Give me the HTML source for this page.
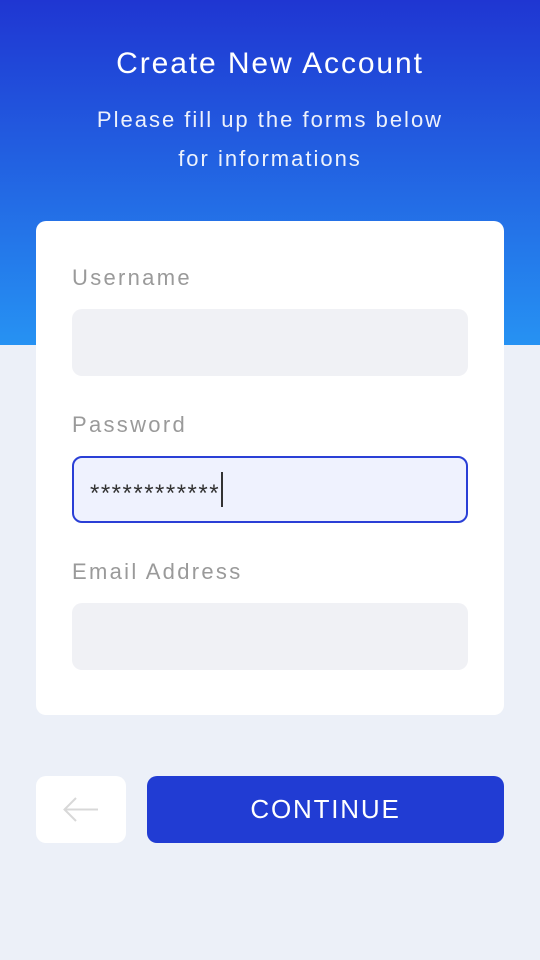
<!DOCTYPE html>
<html><head><meta charset="utf-8"><style>
*{margin:0;padding:0;box-sizing:border-box}
body{width:540px;height:960px;position:relative;background:#ecf0f8;font-family:"Liberation Sans",sans-serif;overflow:hidden}
.hdr{position:absolute;left:0;top:0;width:540px;height:345px;background:linear-gradient(180deg,#1f36d2 0%,#2692f3 100%)}
.t{position:absolute;left:0;width:540px;text-align:center;color:#fff}
.card{position:absolute;left:36px;top:221px;width:468px;height:494px;background:#fff;border-radius:10px}
.lbl{position:absolute;left:72px;font-size:22px;color:#9a9a9a;letter-spacing:2.3px}
.inp{position:absolute;left:72px;width:396px;height:67px;background:#f0f1f5;border-radius:10px}
.back{position:absolute;left:36px;top:776px;width:90px;height:67px;background:#fff;border-radius:10px}
.btn{position:absolute;left:147px;top:776px;width:357px;height:67px;background:#213cd3;border-radius:10px;color:#fff;font-size:26px;text-align:center;line-height:67px;letter-spacing:1.8px}
</style></head><body>
<div class="hdr"></div>
<div class="t" style="top:47px;font-size:30px;letter-spacing:1.9px">Create New Account</div>
<div class="t" style="top:100px;font-size:22px;line-height:39px;opacity:.92;letter-spacing:2px">Please fill up the forms below<br>for informations</div>
<div class="card"></div>
<div class="lbl" style="top:265px">Username</div>
<div class="inp" style="top:309px"></div>
<div class="lbl" style="top:412px">Password</div>
<div class="inp" style="top:456px;background:#eff2fe;border:2px solid #2a3fd6;">
<span style="position:absolute;left:16px;top:22px;font-size:24px;color:#333;letter-spacing:1.5px">************</span>
<span style="position:absolute;left:147px;top:14px;width:2px;height:35px;background:#333"></span></div>
<div class="lbl" style="top:559px">Email Address</div>
<div class="inp" style="top:603px"></div>
<div class="back"><svg width="90" height="67" viewBox="0 0 90 67"><path d="M62 33.5H29M40 22L28.5 33.5L40 45" fill="none" stroke="#d8d8d8" stroke-width="2"/></svg></div>
<div class="btn">CONTINUE</div>
</body></html>
